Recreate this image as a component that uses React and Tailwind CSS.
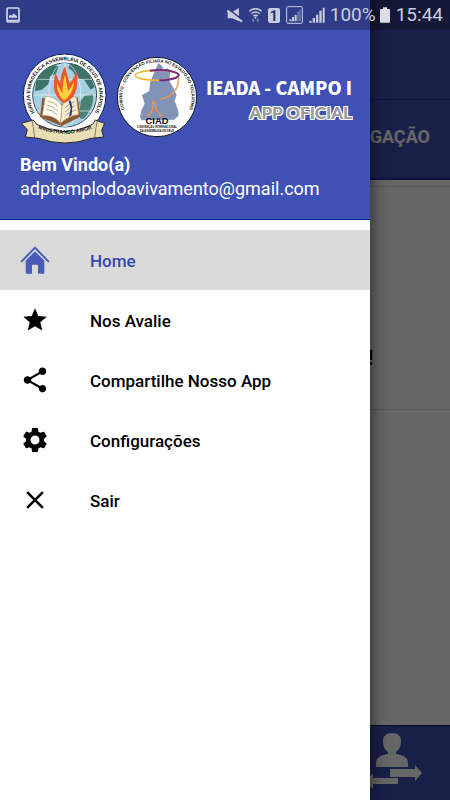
import React from "react";
import { MdStar, MdShare, MdSettings, MdClose } from "react-icons/md";

function MutedIcon() {
  return (
    <svg viewBox="0 0 48 45" className="w-4 h-[15px]" fill="#c9cce0">
      <path d="M2 13h12L36 0v40L16 31H2z" />
      <path d="M2 2l46 35" stroke="#2f3d88" strokeWidth="5" />
      <path d="M1 8l44 33" stroke="#c9cce0" strokeWidth="6" />
    </svg>
  );
}

function WifiIcon() {
  return (
    <svg viewBox="0 0 40 45" className="w-[13px] h-[15px]" fill="none">
      <g stroke="#c9cce0" strokeWidth="4.5">
        <path d="M1 9q19-15 38 0" />
        <path d="M7 17q13-10 26 0" />
        <path d="M13 24q7-5 14 0" />
      </g>
      <circle cx="20" cy="29" r="3.5" fill="#c9cce0" />
      <path d="M8 37l5 6 5-6h-3v-5h-4v5zM22 38l5-6 5 6h-3v5h-4v-5z" fill="#7f87b8" />
    </svg>
  );
}

function SignalIcon({ boxed }) {
  return (
    <svg viewBox="0 0 51 54" className="w-[17px] h-[18px]" fill="#c9cce0">
      {boxed ? (
        <>
          <rect x="2" y="2" width="47" height="50" rx="3" fill="none" stroke="#c9cce0" strokeWidth="3" />
          <path d="M10 40h6v6h-6zM18 33h6v13h-6zM26 26h6v20h-6z" />
          <path d="M34 17h4v29h-4zM40 11h4v35h-4z" fill="#7f87b8" />
        </>
      ) : (
        <path d="M1 45h7v5H1zM11 36h7v14h-7zM21 26h7v24h-7zM31 14h7v36h-7zM41 5h6v45h-6z" />
      )}
    </svg>
  );
}

function StatusBar() {
  return (
    <header className="absolute inset-x-0 top-0 z-20 h-[30px] flex items-center bg-black/25 pl-[6px] pr-[7px] text-[19px] text-[#c9cce0]">
      <svg viewBox="0 0 42 48" className="w-[14px] h-4 mr-auto">
        <rect x="3" y="3" width="36" height="42" rx="4" fill="none" stroke="#d3d5e6" strokeWidth="5" />
        <path d="M3 38h36v5H3zM9 32v-6l5-3 4 3 5-7 5 5 5 3v5z" fill="#d3d5e6" />
      </svg>
      <div className="flex items-center gap-[6px]">
        <MutedIcon />
        <WifiIcon />
        <span className="w-3 h-[15px] rounded-[2px] bg-[#c9cce0] text-center text-sm leading-4 font-bold text-[#26316f]">
          1
        </span>
        <SignalIcon boxed />
        <SignalIcon />
      </div>
      <span className="ml-1">100%</span>
      <svg viewBox="0 0 30 48" className="w-[10px] h-4 ml-1 mr-[6px]" fill="#dcdde3">
        <path d="M9 1h12v5h7q2 0 2 2v37q0 2-2 2H2q-2 0-2-2V8q0-2 2-2h7z" />
      </svg>
      <span>15:44</span>
    </header>
  );
}

function ChurchLogo() {
  return (
    <svg viewBox="0 0 300 300" className="w-[100px] h-[100px] shrink-0" fontFamily="Liberation Sans, sans-serif">
      <defs>
        <path id="churchArc" d="M87 220A104 104 0 1 1 241 220" />
        <path id="ribbonArc" d="M72 246Q165 286 258 246" />
      </defs>
      <circle cx="164" cy="151" r="124" fill="#fff" stroke="#14205a" strokeWidth="3" />
      <circle cx="164" cy="150" r="96" fill="#a9cfe2" stroke="#33516b" strokeWidth="3" />
      <path d="M79 106Q94 72 130 60l16 4-8 22-18 8-5 24-20 16-20 4z" fill="#3d7468" />
      <path d="M178 54q40 4 62 38l14 34-12 8-20-30-24-4-8-20-14-10z" fill="#3d7468" />
      <path d="M205 174l20-22 24-4q6 34-26 72l-12 2z" fill="#4c8276" />
      <g fill="none" stroke="#e5f2f8" strokeWidth="2">
        <ellipse cx="164" cy="150" rx="48" ry="95" />
        <path d="M164 55v190M70 150h188M82 103h164M82 198h164" />
      </g>
      <path d="M97 158l-7 58 65 27 56-28-8-58-46 20z" fill="#8a5a34" />
      <path d="M106 155q30-2 50 27l-4 53q-20-26-55-23z" fill="#fffdf4" stroke="#b29469" strokeWidth="2" />
      <path d="M156 182q17-28 43-27l7 54q-30 2-54 26z" fill="#f8edcf" stroke="#b29469" strokeWidth="2" />
      <path d="M112 168q20 2 34 18M110 180q20 2 34 18M108 192q20 2 34 18M166 188q14-15 28-18M166 200q14-15 30-18M166 212q14-13 32-17" fill="none" stroke="#b9aa8b" strokeWidth="3" />
      <path d="M176 168l6 22-5 26 8-6 2-24-5-20z" fill="#283c94" />
      <path d="M158 173q-26-20-26-48 0-28 4-44 8 22 15 33 0-26 14-50 7 30 14 50 10-10 21-32 4 26 0 48-6 30-34 43z" fill="#ec5a28" />
      <path d="M160 166q-20-20-19-54 9 26 17 32-2-26 7-54 6 28 9 48 10-10 18-32 1 36-27 60z" fill="#ffcf3d" />
      <text fontSize="15" fontWeight="bold" fill="#151515">
        <textPath href="#churchArc" startOffset="50%" textAnchor="middle">
          IGREJA EVANGÉLICA ASSEMBLÉIA DE DEUS DE ANÁPOLIS
        </textPath>
      </text>
      <path d="M34 235l36-10 10 13q84 44 168 0l8-13 28 10-9 21 6 20-37 4q-80 28-158 0l-40-4 6-22z" fill="#e9deb5" stroke="#2b2b22" strokeWidth="3" />
      <path d="M66 228l4 20 4 30M262 228l-4 20-4 30" fill="none" stroke="#57503a" strokeWidth="2" />
      <text fontSize="16" fontWeight="bold" fill="#151515">
        <textPath href="#ribbonArc" startOffset="50%" textAnchor="middle">
          MINISTRANDO AMOR
        </textPath>
      </text>
    </svg>
  );
}

function CiadLogo() {
  return (
    <svg viewBox="0 0 300 300" className="w-[100px] h-[100px] shrink-0" fontFamily="Liberation Sans, sans-serif">
      <defs>
        <path id="ciadArc" d="M51 208A104 104 0 1 1 231 208" />
      </defs>
      <circle cx="141" cy="156" r="119" fill="#fff" stroke="#15151c" strokeWidth="3" />
      <path d="M145 54l12 10 3 10 12-4 9 8-3 30 12 20 10 22-6 18 10 26 2 18-14 12-96 2-6-8 4-22 10-20-8-26 22-12 2-26 12-28z" fill="#8293b8" />
      <ellipse cx="141" cy="91" rx="65" ry="15" fill="none" stroke="#efb62e" strokeWidth="5" />
      <path d="M120 77q46-6 76 5 20 9 0 17-20 7-48 7" fill="none" stroke="#77278a" strokeWidth="6" />
      <path d="M206 98q0 36-26 54-14 8-28 10" fill="none" stroke="#ee984b" strokeWidth="4" />
      <path d="M128 166q6 36-18 48M135 170q2 34 24 44" fill="none" stroke="#ee984b" strokeWidth="4" />
      <text fontSize="13" fontWeight="bold" fill="#151515">
        <textPath href="#ciadArc" startOffset="50%" textAnchor="middle">
          COMFIRTO - CONVENÇÃO FILIADA NO ESTADO DO TOCANTINS
        </textPath>
      </text>
      <g textAnchor="middle" fontWeight="bold" fill="#101010">
        <text x="141" y="237" fontSize="28">CIAD</text>
        <text x="141" y="250" fontSize="8">CONVENÇÃO INTERNACIONAL</text>
        <text x="141" y="260" fontSize="8">DA ASSEMBLEIA DE DEUS</text>
      </g>
    </svg>
  );
}

function HomeIcon() {
  return (
    <svg viewBox="0 0 90 90" className="w-[30px] h-[30px]" fill="#4a5cba">
      <path d="M45 19L17 46v37q0 3 3 3h16V62q0-3 3-3h12q3 0 3 3v24h16q3 0 3-3V46z" />
      <path d="M5 49L45 8l40 41" fill="none" stroke="#4a5cba" strokeWidth="6" strokeLinecap="round" strokeLinejoin="round" />
      <path d="M12 51L45 17l33 34" fill="none" stroke="#c3c8dc" strokeWidth="2" />
    </svg>
  );
}

const menu = [
  { label: "Home", icon: <HomeIcon />, active: true },
  { label: "Nos Avalie", icon: <MdStar size={28} /> },
  { label: "Compartilhe Nosso App", icon: <MdShare size={30} /> },
  { label: "Configurações", icon: <MdSettings size={30} /> },
  { label: "Sair", icon: <MdClose size={30} /> },
];

function Drawer() {
  return (
    <aside className="absolute inset-y-0 left-0 z-10 w-[370px] max-w-full bg-white shadow-[0_0_16px_rgba(0,0,0,0.7)]">
      <div className="h-[220px] pt-[45px] bg-[#3f51b5] border-b border-[#0a22a0] text-white">
        <div className="flex">
          <div className="flex pl-[10px]">
            <ChurchLogo />
            <CiadLogo />
          </div>
          <div className="pt-7 w-[142px] flex flex-col items-end whitespace-nowrap">
            <p className="font-['Noto_Sans_CJK_JP',sans-serif] font-black text-lg leading-7">
              IEADA - CAMPO I
            </p>
            <p className="font-[Lato,sans-serif] font-black text-[17px] leading-6 text-[#999] [text-shadow:1px_1px_0_#fff,-1px_-1px_0_#fff,1px_-1px_0_#fff,-1px_1px_0_#fff]">
              APP OFICIAL
            </p>
          </div>
        </div>
        <div className="pl-5 pt-2 text-lg leading-6">
          <p className="font-bold">Bem Vindo(a)</p>
          <p>adptemplodoavivamento@gmail.com</p>
        </div>
      </div>
      <nav className="pt-[10px]">
        {menu.map((item) => (
          <a
            key={item.label}
            href="#"
            className={
              item.active
                ? "flex items-center gap-10 h-[60px] px-5 text-[17px] font-medium bg-[#dadada] text-[#3045b0]"
                : "flex items-center gap-10 h-[60px] px-5 text-[17px] font-medium text-black"
            }
          >
            <span className="w-[30px] flex justify-center">{item.icon}</span>
            <span className="pt-[3px]">{item.label}</span>
          </a>
        ))}
      </nav>
    </aside>
  );
}

function HomeScreen() {
  return (
    <main className="min-h-screen flex flex-col bg-white">
      <div className="h-[100px] bg-[#3f51b5] border-b border-[#2c3a88]" />
      <div className="h-20 flex items-center justify-end pr-5 pb-1 bg-[#3f51b5] border-b-2 border-[#1f2f9c] text-lg font-bold text-white">
        GAÇÃO
      </div>
      <section className="mt-[6px] h-[224px] border-y border-[#e0e0e0] flex items-center pl-[368px]">
        <p className="pt-[120px] text-xl font-bold text-black">!</p>
      </section>
      <div className="mt-auto h-[75px] flex justify-end pr-5 bg-[#3f51b5] border-t border-[#101c60]">
        <button aria-label="Trocar usuário">
          <svg viewBox="0 0 70 75" className="w-[70px] h-[75px]" fill="#fff">
            <path d="M32 7c6 0 9 3 9 8 0 5-2 9-5 11v2c8 1 12 4 12 9v4H16v-4c0-5 4-8 12-9v-2c-3-2-5-6-5-11 0-5 3-8 9-8z" />
            <path d="M30 43h25v-4l7 8-7 8v-4H30zM38 52v6H13v5l-8-8 8-8v5z" />
          </svg>
        </button>
      </div>
    </main>
  );
}

function App() {
  return (
    <div className="relative min-h-screen overflow-hidden font-[Roboto,sans-serif]">
      <HomeScreen />
      <div className="absolute inset-0 bg-black/60" />
      <Drawer />
      <StatusBar />
    </div>
  );
}

export default App;
